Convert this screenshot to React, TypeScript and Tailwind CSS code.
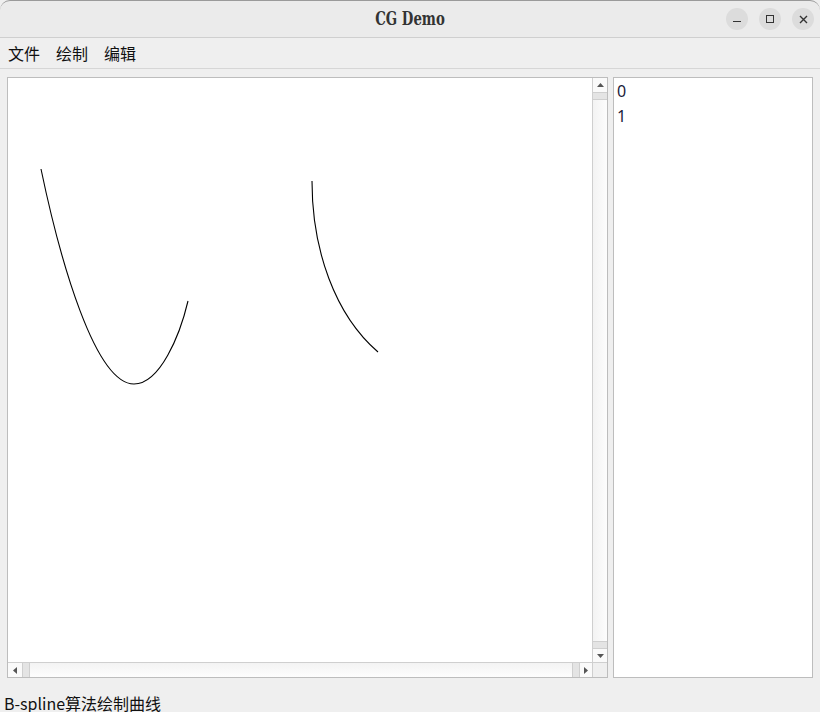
import React from "react";

function ArrowUp() {
  return (
    <svg width="7" height="4" viewBox="0 0 7 4">
      <polygon points="0,4 7,4 3.5,0" fill="#555" />
    </svg>
  );
}
function ArrowDown() {
  return (
    <svg width="7" height="4" viewBox="0 0 7 4">
      <polygon points="0,0 7,0 3.5,4" fill="#555" />
    </svg>
  );
}
function ArrowLeft() {
  return (
    <svg width="4" height="7" viewBox="0 0 4 7">
      <polygon points="4,0 4,7 0,3.5" fill="#555" />
    </svg>
  );
}
function ArrowRight() {
  return (
    <svg width="4" height="7" viewBox="0 0 4 7">
      <polygon points="0,0 0,7 4,3.5" fill="#555" />
    </svg>
  );
}

export default function App() {
  return (
    <div className="w-[820px] h-[712px] bg-[#efefef] flex flex-col overflow-hidden font-['Noto_Sans_CJK_SC',sans-serif] text-[#1e1e1e]">
      {/* title bar */}
      <div className="h-[38px] shrink-0 bg-[#ebebeb] border-b border-[#cfcfcf] rounded-t-[10px] border-t border-t-[#9a9a9a] grid grid-cols-[1fr_auto_1fr] items-center">
        <div />
        <span className="inline-block font-['DejaVu_Serif',serif] font-bold text-[18px] leading-[20px] text-[#333] [transform:scaleX(0.74)]">
          CG Demo
        </span>
        <div className="flex justify-end gap-[11px] pr-[6px]">
          <div className="w-[22px] h-[22px] rounded-full bg-[#dcdcdc] flex items-center justify-center">
            <div className="w-[8px] h-[1.5px] bg-[#333] mt-[5px]" />
          </div>
          <div className="w-[22px] h-[22px] rounded-full bg-[#dcdcdc] flex items-center justify-center">
            <div className="w-[8px] h-[8px] border border-[#333]" />
          </div>
          <div className="w-[22px] h-[22px] rounded-full bg-[#dcdcdc] flex items-center justify-center">
            <svg width="9" height="9" viewBox="0 0 9 9">
              <path d="M1 1 L8 8 M8 1 L1 8" stroke="#333" strokeWidth="1.4" />
            </svg>
          </div>
        </div>
      </div>

      {/* menu bar */}
      <div className="h-[31px] shrink-0 border-b border-[#d6d6d6] flex items-center gap-[16px] pl-[8px] text-[16px] text-[#111]">
        <span>文件</span>
        <span>绘制</span>
        <span>编辑</span>
      </div>

      {/* main */}
      <div className="flex gap-[5px] pl-[7px] pt-[8px]">
        <div className="w-[601px] h-[601px] border border-[#bdbdbd] bg-white grid grid-cols-[1fr_15px] grid-rows-[1fr_15px]">
          <div className="overflow-hidden">
            <svg width="584" height="584" viewBox="8 78 584 584" className="block">
              <path
                d="M41 169 C60 260 95 384 134 384 C160 384 180 335 188 301"
                fill="none"
                stroke="#000"
                strokeWidth="1.1"
              />
              <path d="M312 181 C312 250 335 315 378 352" fill="none" stroke="#000" strokeWidth="1.1" />
            </svg>
          </div>
          {/* vertical scrollbar */}
          <div className="border-l border-[#cfcfcf] bg-[#fafafa] flex flex-col">
            <div className="h-[14px] flex items-center justify-center">
              <ArrowUp />
            </div>
            <div className="h-[8px] bg-[#e4e4e4] border-y border-[#cfcfcf]" />
            <div className="flex-1 bg-gradient-to-r from-[#f3f3f3] to-[#fdfdfd]" />
            <div className="h-[8px] bg-[#e4e4e4] border-y border-[#cfcfcf]" />
            <div className="h-[13px] flex items-center justify-center">
              <ArrowDown />
            </div>
          </div>
          {/* horizontal scrollbar */}
          <div className="border-t border-[#cfcfcf] bg-[#fafafa] flex">
            <div className="w-[14px] flex items-center justify-center">
              <ArrowLeft />
            </div>
            <div className="w-[8px] bg-[#e4e4e4] border-x border-[#cfcfcf]" />
            <div className="flex-1 bg-gradient-to-b from-[#f3f3f3] to-[#fdfdfd]" />
            <div className="w-[8px] bg-[#e4e4e4] border-x border-[#cfcfcf]" />
            <div className="w-[12px] flex items-center justify-center">
              <ArrowRight />
            </div>
          </div>
          <div className="border-t border-l border-[#cfcfcf] bg-[#efefef]" />
        </div>

        <div className="w-[200px] h-[601px] border border-[#bdbdbd] bg-white pt-[1px] pl-[3px] font-['Noto_Sans',sans-serif] text-[16px] text-[#1b1b3a] leading-[25px]">
          <div>0</div>
          <div>1</div>
        </div>
      </div>

      {/* status bar */}
      <div className="pl-[4px] pt-[14px] text-[16px] leading-[22px] text-[#111]">
        B-spline算法绘制曲线
      </div>
    </div>
  );
}
